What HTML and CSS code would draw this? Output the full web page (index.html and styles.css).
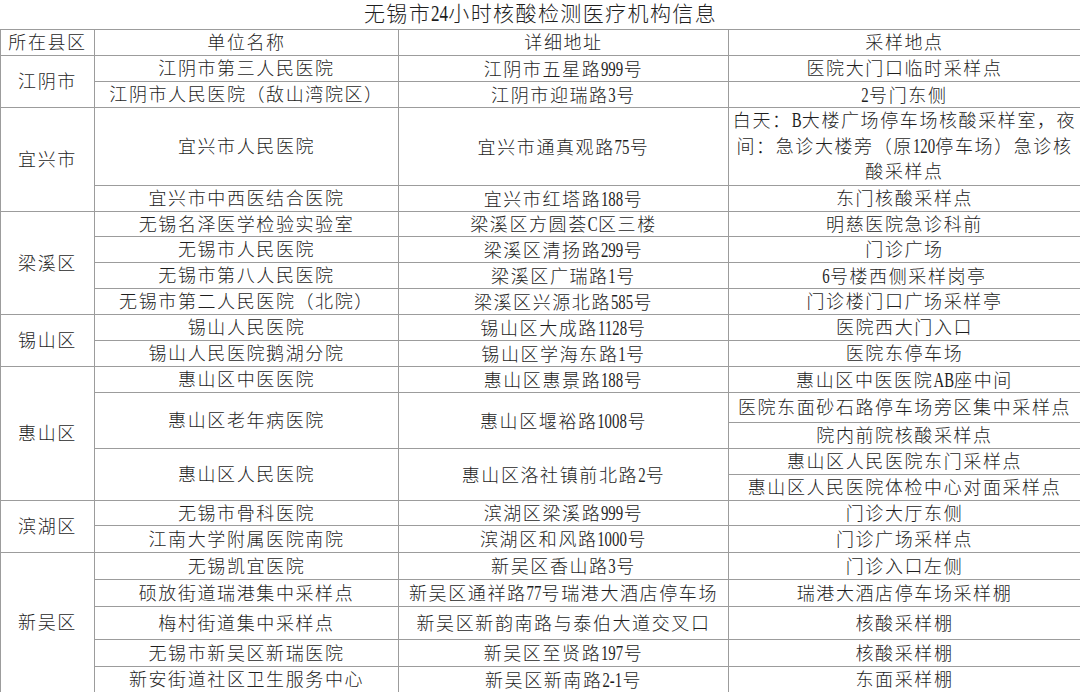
FILE: index.html
```html
<!DOCTYPE html>
<html lang="zh-CN">
<head>
<meta charset="utf-8">
<title>无锡市24小时核酸检测医疗机构信息</title>
<link rel="stylesheet" href="styles.css">
</head>
<body>
<table class="sheet">
  <colgroup>
    <col class="c1"><col class="c2"><col class="c3"><col class="c4">
  </colgroup>
  <tr class="h29"><td class="title" colspan="4">无锡市<span class="n k2">24</span>小时核酸检测医疗机构信息</td></tr>
  <tr class="h26"><td>所在县区</td><td>单位名称</td><td>详细地址</td><td>采样地点</td></tr>

  <tr class="h26"><td rowspan="2">江阴市</td><td>江阴市第三人民医院</td><td>江阴市五星路<span class="n k3">999</span>号</td><td>医院大门口临时采样点</td></tr>
  <tr class="h26"><td>江阴市人民医院（敌山湾院区）</td><td>江阴市迎瑞路<span class="n k1">3</span>号</td><td><span class="n k1">2</span>号门东侧</td></tr>

  <tr class="h78"><td rowspan="2">宜兴市</td><td>宜兴市人民医院</td><td>宜兴市通真观路<span class="n k2">75</span>号</td><td class="multi">白天：<span class="n l1">B</span>大楼广场停车场核酸采样室，夜<br>间：急诊大楼旁（原<span class="n k3">120</span>停车场）急诊核<br>酸采样点</td></tr>
  <tr class="h26"><td>宜兴市中西医结合医院</td><td>宜兴市红塔路<span class="n k3">188</span>号</td><td>东门核酸采样点</td></tr>

  <tr class="h25"><td rowspan="4">梁溪区</td><td>无锡名泽医学检验实验室</td><td>梁溪区方圆荟<span class="n l1">C</span>区三楼</td><td>明慈医院急诊科前</td></tr>
  <tr class="h26"><td>无锡市人民医院</td><td>梁溪区清扬路<span class="n k3">299</span>号</td><td>门诊广场</td></tr>
  <tr class="h26"><td>无锡市第八人民医院</td><td>梁溪区广瑞路<span class="n k1">1</span>号</td><td><span class="n k1">6</span>号楼西侧采样岗亭</td></tr>
  <tr class="h26"><td>无锡市第二人民医院（北院）</td><td>梁溪区兴源北路<span class="n k3">585</span>号</td><td>门诊楼门口广场采样亭</td></tr>

  <tr class="h26"><td rowspan="2">锡山区</td><td>锡山人民医院</td><td>锡山区大成路<span class="n k4">1128</span>号</td><td>医院西大门入口</td></tr>
  <tr class="h26"><td>锡山人民医院鹅湖分院</td><td>锡山区学海东路<span class="n k1">1</span>号</td><td>医院东停车场</td></tr>

  <tr class="h26"><td rowspan="5">惠山区</td><td>惠山区中医医院</td><td>惠山区惠景路<span class="n k3">188</span>号</td><td>惠山区中医医院<span class="n l2">AB</span>座中间</td></tr>
  <tr class="h30"><td rowspan="2">惠山区老年病医院</td><td rowspan="2">惠山区堰裕路<span class="n k4">1008</span>号</td><td>医院东面砂石路停车场旁区集中采样点</td></tr>
  <tr class="h26"><td>院内前院核酸采样点</td></tr>
  <tr class="h26"><td rowspan="2">惠山区人民医院</td><td rowspan="2">惠山区洛社镇前北路<span class="n k1">2</span>号</td><td>惠山区人民医院东门采样点</td></tr>
  <tr class="h26"><td>惠山区人民医院体检中心对面采样点</td></tr>

  <tr class="h25"><td rowspan="2">滨湖区</td><td>无锡市骨科医院</td><td>滨湖区梁溪路<span class="n k3">999</span>号</td><td>门诊大厅东侧</td></tr>
  <tr class="h27"><td>江南大学附属医院南院</td><td>滨湖区和风路<span class="n k4">1000</span>号</td><td>门诊广场采样点</td></tr>

  <tr class="h27"><td rowspan="5">新吴区</td><td>无锡凯宜医院</td><td>新吴区香山路<span class="n k1">3</span>号</td><td>门诊入口左侧</td></tr>
  <tr class="h27"><td>硕放街道瑞港集中采样点</td><td>新吴区通祥路<span class="n k2">77</span>号瑞港大酒店停车场</td><td>瑞港大酒店停车场采样棚</td></tr>
  <tr class="h33"><td>梅村街道集中采样点</td><td>新吴区新韵南路与泰伯大道交叉口</td><td>核酸采样棚</td></tr>
  <tr class="h27"><td>无锡市新吴区新瑞医院</td><td>新吴区至贤路<span class="n k3">197</span>号</td><td>核酸采样棚</td></tr>
  <tr class="h26"><td>新安街道社区卫生服务中心</td><td>新吴区新南路<span class="n kh">2-1</span>号</td><td>东面采样棚</td></tr>
</table>
</body>
</html>
```
FILE: styles.css
```css
html, body {
  margin: 0;
  padding: 0;
  background: #ffffff;
}
body {
  font-family: "Liberation Serif", "Noto Sans CJK SC", serif;
  color: #1e1e1e;
  width: 1080px;
  height: 692px;
  overflow: hidden;
}
.sheet {
  border-collapse: collapse;
  table-layout: fixed;
  width: 1080px;
}
.c1 { width: 94px; }
.c2 { width: 304px; }
.c3 { width: 330px; }
.c4 { width: 352px; }
.sheet td {
  border: 1px solid #9c9c9c;
  padding: 2px 0 0 0;
  text-align: center;
  vertical-align: middle;
  font-size: 18px;
  font-weight: 300;
  letter-spacing: 1.6px;
  line-height: 20px;
  white-space: nowrap;
  overflow: hidden;
}
.sheet td.title {
  border-top: none;
  border-left: none;
  border-right: none;
  padding-top: 0;
  font-size: 21px;
  letter-spacing: 1.4px;
  line-height: 24px;
}
.sheet td.multi {
  white-space: normal;
  padding-top: 0;
  line-height: 25px;
}
/* narrow serif digits: scaled horizontally, margins give back the freed space */
.n {
  display: inline-block;
  font-family: "Liberation Serif", serif;
  font-weight: 400;
  font-size: 20px;
  letter-spacing: 0;
  transform: scaleX(0.74);
  transform-origin: center;
}
.k1 { margin: 0 -1.1px 0 -1.3px; }
.k2 { margin: 0 -2.4px 0 -2.6px; }
.k3 { margin: 0 -3.7px 0 -3.9px; }
.k4 { margin: 0 -5px 0 -5.2px; }
.kh { margin: 0 -3.3px 0 -3.5px; }
.l1 { margin: 0 -1.5px 0 -1.7px; }
.l2 { margin: 0 -3.4px 0 -3.6px; }
.title .n {
  font-size: 23px;
}
.title .k2 { margin: 0 -2.8px 0 -3px; }
.h25 { height: 25px; }
.h26 { height: 26px; }
.h27 { height: 27px; }
.h29 { height: 29px; }
.h30 { height: 30px; }
.h33 { height: 33px; }
.h78 { height: 78px; }
```
